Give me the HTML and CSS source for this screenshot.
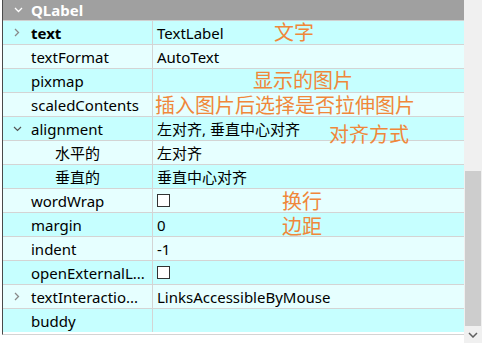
FILE: index.html
```html
<!DOCTYPE html>
<html lang="zh-CN">
<head>
    <meta charset="UTF-8">
    <title>属性编辑器 - QLabel</title>
    <link rel="stylesheet" href="styles.css">
</head>
<body>
    <div class="editor">
        <div class="tree">
            <div class="group">
                <span class="arrow down light">
                    <svg width="9" height="6" viewBox="0 0 9 6"><path d="M1 1 L4.5 4.5 L8 1" fill="none" stroke="#fff" stroke-width="1.3"/></svg>
                </span>
                <span class="group-name">QLabel</span>
            </div>

            <div class="row dark">
                <div class="name"><span class="arrow"><svg width="6" height="9" viewBox="0 0 6 9"><path d="M1 1 L4.5 4.5 L1 8" fill="none" stroke="#8a8a8a" stroke-width="1.3"/></svg></span><b>text</b></div>
                <div class="value">TextLabel</div>
            </div>
            <div class="row light">
                <div class="name"><span class="arrow"></span>textFormat</div>
                <div class="value">AutoText</div>
            </div>
            <div class="row dark">
                <div class="name"><span class="arrow"></span>pixmap</div>
                <div class="value"></div>
            </div>
            <div class="row light">
                <div class="name"><span class="arrow"></span>scaledContents</div>
                <div class="value"></div>
            </div>
            <div class="row dark">
                <div class="name"><span class="arrow"><svg width="9" height="6" viewBox="0 0 9 6"><path d="M1 1 L4.5 4.5 L8 1" fill="none" stroke="#555" stroke-width="1.2"/></svg></span>alignment</div>
                <div class="value">左对齐, 垂直中心对齐</div>
            </div>
            <div class="row light">
                <div class="name child"><span class="arrow"></span>水平的</div>
                <div class="value">左对齐</div>
            </div>
            <div class="row dark">
                <div class="name child"><span class="arrow"></span>垂直的</div>
                <div class="value">垂直中心对齐</div>
            </div>
            <div class="row light">
                <div class="name"><span class="arrow"></span>wordWrap</div>
                <div class="value"><span class="check"></span></div>
            </div>
            <div class="row dark">
                <div class="name"><span class="arrow"></span>margin</div>
                <div class="value">0</div>
            </div>
            <div class="row light">
                <div class="name"><span class="arrow"></span>indent</div>
                <div class="value">-1</div>
            </div>
            <div class="row dark">
                <div class="name"><span class="arrow"></span>openExternalL...</div>
                <div class="value"><span class="check"></span></div>
            </div>
            <div class="row light">
                <div class="name"><span class="arrow"><svg width="6" height="9" viewBox="0 0 6 9"><path d="M1 1 L4.5 4.5 L1 8" fill="none" stroke="#8a8a8a" stroke-width="1.3"/></svg></span>textInteractio...</div>
                <div class="value">LinksAccessibleByMouse</div>
            </div>
            <div class="row dark">
                <div class="name"><span class="arrow"></span>buddy</div>
                <div class="value"></div>
            </div>

            <!-- 标注 -->
            <span class="note note-text">文字</span>
            <span class="note note-pixmap">显示的图片</span>
            <span class="note note-scaled">插入图片后选择是否拉伸图片</span>
            <span class="note note-align">对齐方式</span>
            <span class="note note-wrap">换行</span>
            <span class="note note-margin">边距</span>
        </div>

        <div class="scrollbar">
            <div class="track">
                <div class="thumb"></div>
            </div>
            <div class="scroll-btn">
                <svg width="10" height="6" viewBox="0 0 10 6"><path d="M1 1 L5 5 L9 1" fill="none" stroke="#606060" stroke-width="1.5"/></svg>
            </div>
        </div>
    </div>
</body>
</html>
```

FILE: styles.css
```css
body {
    margin: 0;
    background: #fff;
    font-family: "Noto Sans", "Noto Sans CJK SC", sans-serif;
    font-size: 15px;
    color: #000;
}

.editor {
    display: flex;
    width: 482px;
    height: 343px;
}

.tree {
    position: relative;
    width: 462px;
    margin-left: 2px;
    height: 334px;
    border-left: 1px solid #4a4a4a;
    border-bottom: 1px solid #d4d4d4;
}

.group {
    display: flex;
    align-items: center;
    height: 20px;
    background: #a0a0a0;
    color: #fff;
    border-bottom: 1px solid #d0d0d0;
}

.group .arrow {
    width: 25px;
    padding-left: 3px;
}

.group-name {
    font-weight: bold;
    font-size: 15px;
}

.row {
    display: flex;
    height: 23px;
    border-bottom: 1px solid #d4d4d4;
}

.row:last-of-type {
    border-bottom: none;
}

.row.dark {
    background: #c6ffff;
}

.row.light {
    background: #e6ffff;
}

.name {
    display: flex;
    align-items: center;
    width: 149px;
    border-right: 1px solid #d4d4d4;
    white-space: nowrap;
    overflow: hidden;
}

.name.child {
    padding-left: 24px;
    width: 125px;
}

.arrow {
    display: inline-flex;
    justify-content: center;
    align-items: center;
    width: 28px;
    flex-shrink: 0;
}

.value {
    display: flex;
    align-items: center;
    padding-left: 4px;
    flex: 1;
}

.check {
    display: inline-block;
    width: 11px;
    height: 11px;
    border: 1px solid #333;
    background: #fff;
}

.note {
    position: absolute;
    color: #f0873a;
    font-family: "Noto Sans CJK SC", sans-serif;
    font-size: 20px;
    line-height: 18px;
    white-space: nowrap;
}

.note-text { left: 271px; top: 23px; }
.note-pixmap { left: 250px; top: 71px; }
.note-scaled { left: 152px; top: 96px; }
.note-align { left: 326px; top: 125px; }
.note-wrap { left: 279px; top: 192px; }
.note-margin { left: 279px; top: 217px; }

.scrollbar {
    display: flex;
    flex-direction: column;
    width: 18px;
    height: 343px;
    background: #f0f0f0;
}

.track {
    flex: 1;
    display: flex;
    flex-direction: column;
    justify-content: flex-end;
    padding: 0 1px;
}

.thumb {
    height: 155px;
    background: #cdcdcd;
}

.scroll-btn {
    height: 17px;
    display: flex;
    justify-content: center;
    align-items: center;
}
```
